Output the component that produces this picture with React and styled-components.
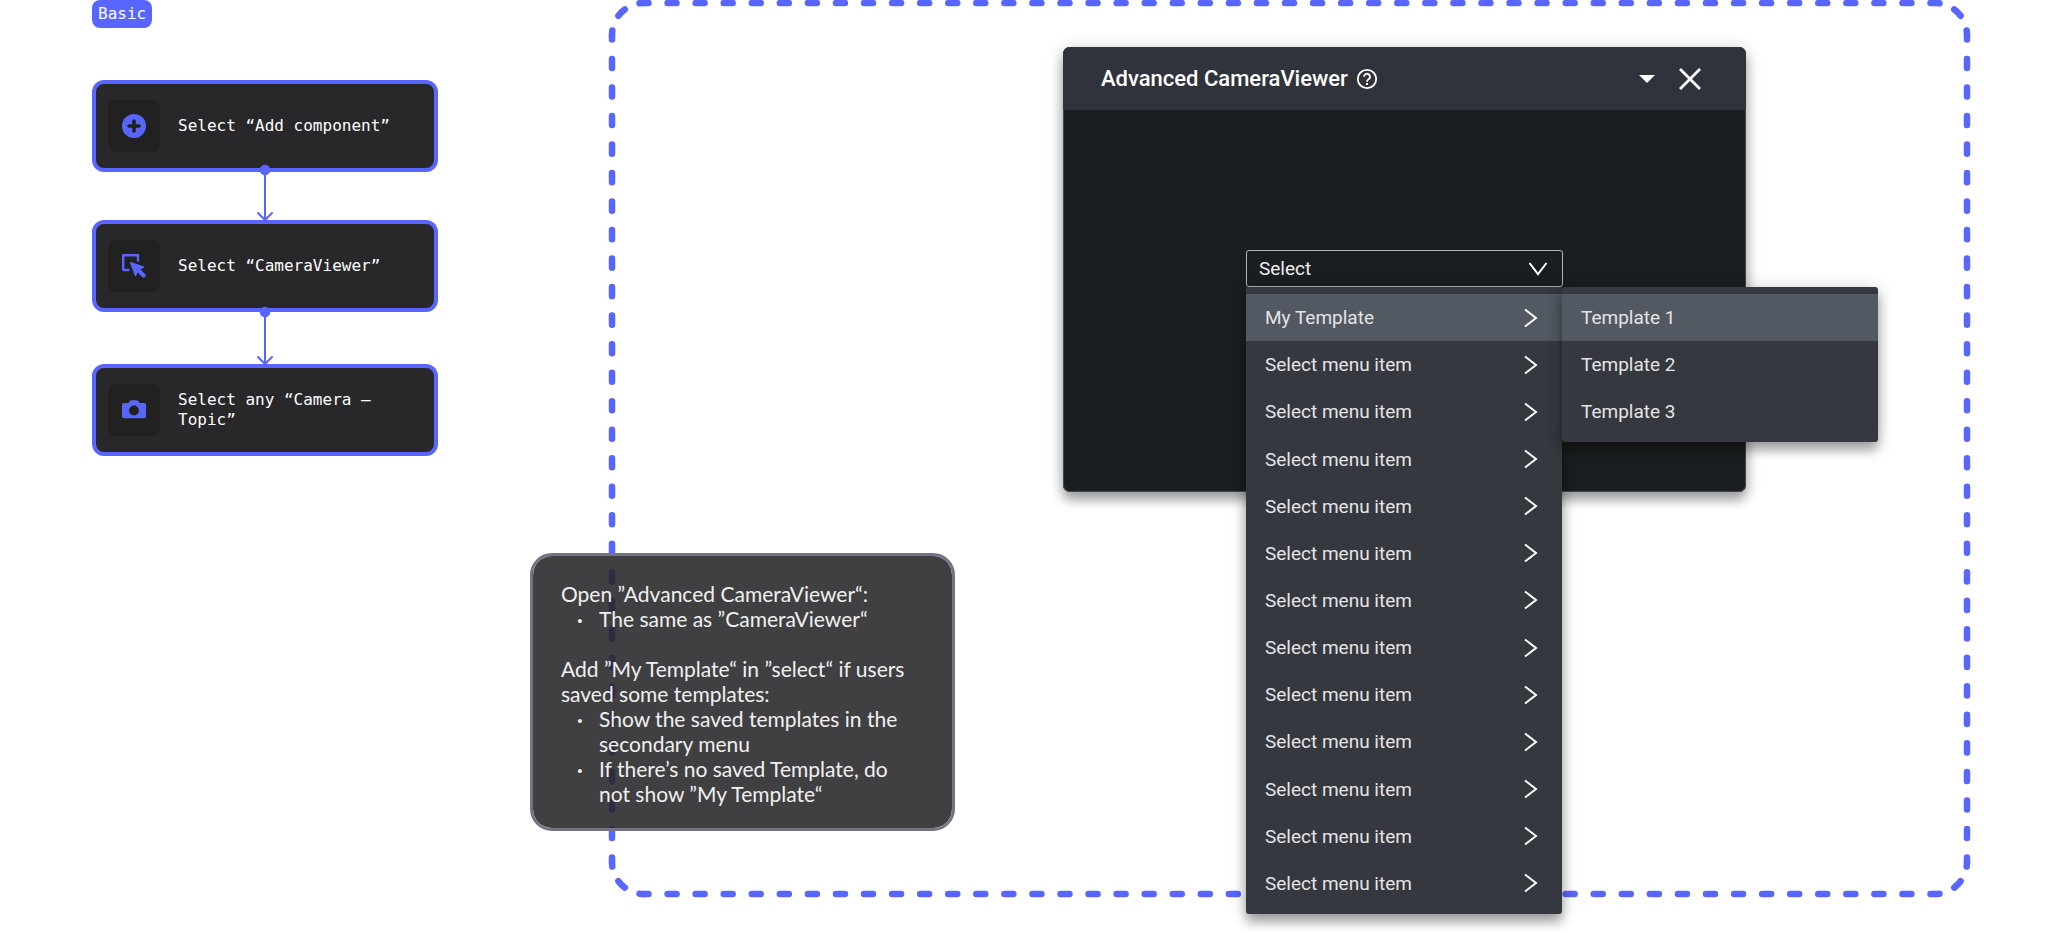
import React from "react";
import styled, { createGlobalStyle } from "styled-components";

const accent = "#5965ff";

const GlobalStyle = createGlobalStyle`
  *, *::before, *::after { box-sizing: border-box; }
  body { margin: 0; background: #fff; font-family: Roboto, "Liberation Sans", sans-serif; }
  button, select { font: inherit; color: inherit; }
`;

const Page = styled.div`
  display: flex;
  align-items: flex-start;
  gap: 171px;
  min-height: 100vh;
  padding: 0 92px;
`;

const Flow = styled.section`
  flex: 0 0 346px;
  display: flex;
  flex-direction: column;
  font: 16px/20px "DejaVu Sans Mono", monospace;
  color: #fff;
`;

const Badge = styled.h2`
  align-self: flex-start;
  margin: 0 0 52px;
  padding: 4px 6px;
  border-radius: 8px;
  background: ${accent};
  font: inherit;
`;

const Step = styled.div`
  display: flex;
  align-items: center;
  gap: 18px;
  height: 92px;
  padding: 0 28px 0 12px;
  border: 4px solid ${accent};
  border-radius: 12px;
  background: #28282a;
`;

const StepIcon = styled.span`
  flex: none;
  display: grid;
  place-items: center;
  width: 52px;
  height: 52px;
  border-radius: 8px;
  background: #212121;
  color: ${accent};
`;

const Link = styled.svg`
  position: relative;
  display: block;
  align-self: center;
  width: 16px;
  overflow: visible;
  fill: none;
  stroke: ${accent};
  stroke-width: 2;
  stroke-linecap: round;
`;

const Frame = styled.main`
  position: relative;
  flex: 1;
  display: flex;
  flex-direction: column;
  align-items: flex-end;
  min-height: calc(100vh - 45px);
  padding: 47px 224px 0 0;
`;

const Dashes = styled.svg`
  position: absolute;
  top: 35px;
  left: 35px;
  width: calc(100% - 70px);
  height: calc(100% - 70px);
  overflow: visible;
  fill: none;
  stroke: ${accent};
  stroke-width: 6.5;
  stroke-linecap: round;

  svg { overflow: visible; }
`;

const Note = styled.aside`
  position: absolute;
  top: 553px;
  left: -79px;
  width: 425px;
  padding: 25px 28px 22px;
  border: 3px solid #747486;
  border-radius: 22px;
  background: rgba(38, 38, 40, 0.88);
  background-clip: padding-box;
  color: #f0f0f0;
  font: 21px/25px Lato, sans-serif;
  white-space: nowrap;

  p { margin: 0; }
  ul { margin: 0; padding: 0; list-style: none; }
  ul + p { margin-top: 25px; }
  li { display: flex; }
  li::before { content: "·"; width: 38px; padding-left: 16px; font-weight: 700; }
`;

const Window = styled.section`
  width: 683px;
  border-radius: 7px;
  background: #1b1e20;
  color: #fff;
  box-shadow: inset 0 0 0 1px #45484c, 0 8px 12px rgba(0, 0, 0, 0.34), 0 0 18px rgba(0, 0, 0, 0.14);
`;

const WindowHeader = styled.header`
  display: flex;
  align-items: center;
  height: 63px;
  padding: 0 44px 0 38px;
  border-radius: 7px 7px 0 0;
  background: #30333b;
`;

const Title = styled.h1`
  margin: 0;
  font-size: 22px;
  line-height: 28px;
  font-weight: 500;
`;

const IconButton = styled.button`
  display: grid;
  place-items: center;
  width: 24px;
  height: 24px;
  margin-left: ${(p) => p.$gap};
  padding: 0;
  border: 0;
  background: none;
`;

const WindowBody = styled.div`
  display: flex;
  justify-content: center;
  height: 382px;
  padding-top: 140px;
`;

const Field = styled.div`
  position: relative;
  align-self: flex-start;
  width: 317px;
  font-size: 19px;
`;

const Select = styled.select`
  display: block;
  width: 100%;
  height: 37px;
  padding: 0 12px;
  border: 1px solid #b4b6b6;
  border-radius: 3px;
  background: #1b1e20;
  color: #eee;
  appearance: none;
`;

const SelectArrow = styled.svg`
  position: absolute;
  top: 12px;
  right: 15px;
  pointer-events: none;
`;

const Menu = styled.div`
  position: absolute;
  top: ${(p) => (p.$sub ? "0" : "100%")};
  left: ${(p) => (p.$sub ? "100%" : "0")};
  display: grid;
  grid-auto-rows: 1fr;
  width: 316px;
  height: ${(p) => (p.$sub ? "155px" : "627px")};
  padding: 7px 0;
  border-radius: ${(p) => (p.$sub ? "3px" : "0 0 3px 3px")};
  background: #35383f;
  color: #e4e4e4;
  box-shadow: 0 8px 12px rgba(0, 0, 0, 0.34), 0 0 18px rgba(0, 0, 0, 0.14);
`;

const MenuItem = styled.button`
  display: flex;
  align-items: center;
  justify-content: space-between;
  padding: 0 24px 0 19px;
  border: 0;
  background: ${(p) => (p.$active ? "#525962" : "none")};
  text-align: left;
`;

const Chevron = () => (
  <svg width="14" height="20" viewBox="0 0 14 20" fill="none" stroke="#fff" strokeWidth="2">
    <path d="M1 1.5L12 10L1 18.5" />
  </svg>
);

const PlusIcon = () => (
  <svg width="24" height="24" viewBox="0 0 24 24">
    <circle cx="12" cy="12" r="12" fill="currentColor" />
    <path d="M12 7v10M7 12h10" stroke="#212121" strokeWidth="3.6" strokeLinecap="round" />
  </svg>
);

const PickIcon = () => (
  <svg width="24" height="24" viewBox="0 0 24 24" fill="currentColor">
    <path d="M1.4 0H16a1.2 1.2 0 0 1 1.2 1.2V7.5H14.8V2.4H2.4V14.8H7.5V17.2H1.4A1.4 1.4 0 0 1 0 15.8V1.4A1.4 1.4 0 0 1 1.4 0Z" />
    <path d="M9 8L22 12.6Q22.7 13 22 13.4L18.6 15.6L23.5 20.6Q24.2 21.4 23.5 22.2L22.4 23.4Q21.6 24 20.8 23.4L15.8 18.5L14 22Q13.4 22.7 13 22L8 9Q7.9 7.9 9 8Z" />
  </svg>
);

const CameraIcon = () => (
  <svg width="24" height="24" viewBox="0 0 24 24" fill="currentColor" fillRule="evenodd">
    <path d="M2 5H6.5L7.6 3.2Q8.2 2.3 9.2 2.3H14.8Q15.8 2.3 16.4 3.2L17.5 5H22Q24 5 24 7V18.3Q24 20.3 22 20.3H2Q0 20.3 0 18.3V7Q0 5 2 5ZM12 7.5a5 5 0 1 0 0 10a5 5 0 1 0 0-10Z" />
  </svg>
);

function Connector({ height, start }) {
  return (
    <Link height={height} viewBox={`0 0 16 ${height}`} aria-hidden="true">
      <circle cx="8" cy={start} r="5.3" fill={accent} stroke="none" />
      <path d={`M8 ${start}V${height}M1 ${height - 7}L8 ${height}L15 ${height - 7}`} />
    </Link>
  );
}

function DashedOutline() {
  const side = { strokeDasharray: "0.32 0.68", strokeDashoffset: 0.16 };
  const corner = { pathLength: 2, strokeDasharray: "0.36 0.64", strokeDashoffset: 0.18 };
  return (
    <Dashes aria-hidden="true">
      <line x1="0" y1="-32" x2="100%" y2="-32" pathLength="46" {...side} />
      <line x1="-32" y1="0" x2="-32" y2="100%" pathLength="29" {...side} />
      <path d="M-32 0A32 32 0 0 1 0 -32" {...corner} />
      <svg x="100%">
        <line x1="32" y1="0" x2="32" y2="100%" pathLength="29" {...side} />
        <path d="M0 -32A32 32 0 0 1 32 0" {...corner} />
      </svg>
      <svg y="100%">
        <line x1="0" y1="32" x2="100%" y2="32" pathLength="46" {...side} />
        <path d="M-32 0A32 32 0 0 0 0 32" {...corner} />
      </svg>
      <svg x="100%" y="100%">
        <path d="M32 0A32 32 0 0 1 0 32" {...corner} />
      </svg>
    </Dashes>
  );
}

const menuItems = ["My Template", ...Array(12).fill("Select menu item")];
const templates = ["Template 1", "Template 2", "Template 3"];

export default function App() {
  return (
    <>
      <GlobalStyle />
      <Page>
        <Flow>
          <Badge>Basic</Badge>
          <Step>
            <StepIcon><PlusIcon /></StepIcon>
            <span>Select “Add component”</span>
          </Step>
          <Connector height={48} start={-2} />
          <Step>
            <StepIcon><PickIcon /></StepIcon>
            <span>Select “CameraViewer”</span>
          </Step>
          <Connector height={52} start={0} />
          <Step>
            <StepIcon><CameraIcon /></StepIcon>
            <span>Select any “Camera – Topic”</span>
          </Step>
        </Flow>

        <Frame>
          <DashedOutline />
          <Window>
            <WindowHeader>
              <Title>Advanced CameraViewer</Title>
              <IconButton $gap="7px" aria-label="Help">
                <svg width="22" height="22" viewBox="0 0 22 22" fill="none" stroke="#fff" strokeWidth="1.8">
                  <circle cx="11" cy="11" r="9.2" />
                  <path d="M8 8.8a3 3 0 1 1 4.6 2.5c-1 .7-1.6 1.100-1.600 2.400" />
                  <path d="M11 15v2" strokeWidth="2" />
                </svg>
              </IconButton>
              <IconButton $gap="auto" aria-label="Collapse">
                <svg width="16" height="8" viewBox="0 0 16 8" fill="#fff"><path d="M0 0H16L8 8Z" /></svg>
              </IconButton>
              <IconButton $gap="19px" aria-label="Close">
                <svg width="24" height="24" viewBox="0 0 24 24" stroke="#fff" strokeWidth="2.8">
                  <path d="M2 2L22 22M22 2L2 22" />
                </svg>
              </IconButton>
            </WindowHeader>
            <WindowBody>
              <Field>
                <Select aria-label="Template" defaultValue="Select">
                  <option>Select</option>
                </Select>
                <SelectArrow width="20" height="14" viewBox="0 0 20 14" fill="none" stroke="#fff" strokeWidth="2" aria-hidden="true">
                  <path d="M1.5 1L10 12L18.5 1" />
                </SelectArrow>
                <Menu role="menu">
                  {menuItems.map((label, i) => (
                    <MenuItem key={i} role="menuitem" $active={i === 0}>
                      {label}
                      <Chevron />
                    </MenuItem>
                  ))}
                  <Menu $sub role="menu">
                    {templates.map((label, i) => (
                      <MenuItem key={label} role="menuitem" $active={i === 0}>{label}</MenuItem>
                    ))}
                  </Menu>
                </Menu>
              </Field>
            </WindowBody>
          </Window>
          <Note>
            <p>Open ”Advanced CameraViewer“:</p>
            <ul>
              <li>The same as ”CameraViewer“</li>
            </ul>
            <p>Add ”My Template“ in ”select“ if users<br />saved some templates:</p>
            <ul>
              <li><span>Show the saved templates in the<br />secondary menu</span></li>
              <li><span>If there’s no saved Template, do<br />not show ”My Template“</span></li>
            </ul>
          </Note>
        </Frame>
      </Page>
    </>
  );
}
